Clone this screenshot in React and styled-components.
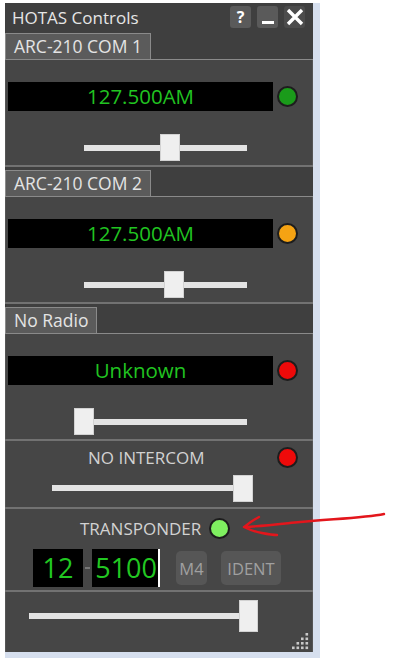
import React from "react"
import styled, { createGlobalStyle } from "styled-components"

const GlobalStyle = createGlobalStyle`
  body { margin: 0; background: #fff; font-family: "Open Sans", "Liberation Sans", sans-serif; }
`

const Page = styled.div`
  position: relative;
  width: 400px;
  height: 666px;
  padding: 3px 0 0 5px;
  box-sizing: border-box;
`

const Window = styled.div`
  width: 308px;
  background: #3f3f3f;
  border-right: 7px solid #d6dfee;
  border-bottom: 6px solid #d6dfee;
  display: flex;
  flex-direction: column;
`

const TitleBar = styled.div`
  height: 28px;
  display: flex;
  align-items: center;
  padding: 0 8px 0 7px;
`
const Title = styled.div`
  color: #e6e6e6;
  font-size: 17px;
`
const TitleButtons = styled.div`
  margin-left: auto;
  display: flex;
  gap: 6px;
`
const TitleBtn = styled.div`
  width: 21px;
  height: 22px;
  border-radius: 3px;
  background: ${p => p.$bg || "#5a5a5a"};
  color: #fff;
  font-weight: bold;
  font-size: 16px;
  display: flex;
  align-items: center;
  justify-content: center;
`
const Underscore = styled.span`
  width: 12px;
  height: 3px;
  background: #fff;
  margin-top: 10px;
`

const Block = styled.div`
  border-top: ${p => (p.$first ? "none" : "2px solid #727272")};
`
const TabStrip = styled.div`
  height: ${p => p.$h || 30}px;
  display: flex;
  align-items: flex-end;
  border-bottom: 1px solid #8a8a8a;
  box-sizing: border-box;
`
const Tab = styled.div`
  height: 26px;
  box-sizing: border-box;
  padding: 0 8px;
  background: #5b5b5b;
  border: 1px solid #8a8a8a;
  border-bottom: none;
  color: #e4e4e4;
  font-size: 17.5px;
  line-height: 25px;
  white-space: nowrap;
`
const Content = styled.div`
  height: ${p => p.$h}px;
  background: #464646;
  box-sizing: border-box;
  padding-top: ${p => p.$pt || 0}px;
  border-left: 1px solid #555;
  border-right: 1px solid #555;
  position: relative;
`

const DisplayRow = styled.div`
  display: flex;
  align-items: center;
  padding-left: 2px;
  height: 29px;
`
const Display = styled.div`
  width: 265px;
  height: 29px;
  background: #000;
  color: #21c421;
  font-size: 20.5px;
  line-height: 29px;
  text-align: center;
`
const Led = styled.div`
  width: ${p => p.$size || 21}px;
  height: ${p => p.$size || 21}px;
  border-radius: 50%;
  box-sizing: border-box;
  background: ${p => p.$color};
  border: 2px solid ${p => p.$rim || "#1d1d1d"};
  margin-left: ${p => p.$ml || 4}px;
  flex-shrink: 0;
`

const SliderArea = styled.div`
  display: flex;
  align-items: center;
  height: ${p => p.$h}px;
  margin-top: ${p => p.$mt || 0}px;
  padding-left: ${p => p.$left}px;
`
const Track = styled.div`
  position: relative;
  width: ${p => p.$w}px;
  height: 6px;
  background: #e3e3e3;
`
const Thumb = styled.div`
  position: absolute;
  top: 50%;
  width: ${p => p.$w}px;
  height: ${p => p.$h}px;
  margin-top: ${p => -p.$h / 2}px;
  margin-left: ${p => -p.$w / 2}px;
  box-sizing: border-box;
  background: #efefef;
  border: 1px solid #d2d2d2;
`

function Slider({ left, width, value, h = 27, tw = 20, th = 27, mt }) {
  return (
    <SliderArea $h={h} $left={left} $mt={mt}>
      <Track $w={width}>
        <Thumb $w={tw} $h={th} style={{ left: `${value * 100}%` }} />
      </Track>
    </SliderArea>
  )
}

const LabelRow = styled.div`
  display: flex;
  align-items: center;
  padding-left: ${p => p.$left}px;
  padding-top: ${p => p.$pt || 0}px;
  height: ${p => p.$h}px;
`
const Label = styled.div`
  color: #d2d2d2;
  font-size: 17px;
`

const CodeRow = styled.div`
  display: flex;
  align-items: center;
  padding-left: 27px;
  margin-top: 4px;
`
const CodeBox = styled.div`
  width: ${p => p.$w}px;
  height: 38px;
  background: #000;
  color: #22c822;
  font-size: 27px;
  line-height: 38px;
  display: flex;
  justify-content: ${p => (p.$right ? "flex-end" : "center")};
  box-sizing: border-box;
`
const Caret = styled.span`
  width: 2px;
  height: 38px;
  background: #fff;
  margin-left: 1px;
`
const Dash = styled.span`
  width: 5px;
  height: 2px;
  background: #777;
  margin: 0 2px;
`
const SmallBtn = styled.div`
  width: ${p => p.$w}px;
  height: 34px;
  margin-left: ${p => p.$ml}px;
  border-radius: 5px;
  background: #565656;
  color: #a0a0a0;
  font-size: 16.5px;
  display: flex;
  align-items: center;
  justify-content: center;
`

const Grip = styled.svg`
  position: absolute;
  right: 3px;
  bottom: 2px;
`

const Annotation = styled.svg`
  position: absolute;
  left: 0;
  top: 0;
  pointer-events: none;
`

function RadioBlock({ first, tab, freq, led, value, stripH }) {
  return (
    <Block $first={first}>
      <TabStrip $h={stripH}>
        <Tab>{tab}</Tab>
      </TabStrip>
      <Content $h={105} $pt={22}>
        <DisplayRow>
          <Display>{freq}</Display>
          <Led $color={led} />
        </DisplayRow>
        <Slider left={78} width={163} value={value} h={27} mt={23} />
      </Content>
    </Block>
  )
}

function GripDots() {
  const dots = []
  for (let r = 0; r < 4; r++) {
    for (let c = 3 - r; c < 4; c++) {
      dots.push(<rect key={`${r}-${c}`} x={c * 4.5} y={r * 4.5} width="2.6" height="2.6" fill="#c8c8c8" />)
    }
  }
  return (
    <Grip width="17" height="17" viewBox="0 0 17 17">
      {dots}
    </Grip>
  )
}

export default function App() {
  return (
    <Page>
      <GlobalStyle />
      <Window>
        <TitleBar>
          <Title>HOTAS Controls</Title>
          <TitleButtons>
            <TitleBtn>?</TitleBtn>
            <TitleBtn><Underscore /></TitleBtn>
            <TitleBtn $bg="#4c4c4c">
              <svg width="18" height="18" viewBox="0 0 18 18">
                <path d="M2 2 L16 16 M16 2 L2 16" stroke="#fff" strokeWidth="3.4" />
              </svg>
            </TitleBtn>
          </TitleButtons>
        </TitleBar>

        <RadioBlock first stripH={29} tab="ARC-210 COM 1" freq="127.500AM" led="#1a9b1a" value={0.53} />
        <RadioBlock tab="ARC-210 COM 2" freq="127.500AM" led="#f5a313" value={0.55} />
        <RadioBlock tab="No Radio" freq="Unknown" led="#ee0a0a" value={0} />

        <Block>
          <Content $h={66}>
            <LabelRow $left={82} $h={28} $pt={2}>
              <Label>NO INTERCOM</Label>
              <Led $color="#ee0a0a" $ml={72} />
            </LabelRow>
            <Slider left={46} width={191} value={1} h={30} mt={2} />
          </Content>
        </Block>

        <Block>
          <Content $h={81}>
            <LabelRow $left={74} $h={34} $pt={2}>
              <Label>TRANSPONDER</Label>
              <Led $color="#7ff060" $ml={8} />
            </LabelRow>
            <CodeRow>
              <CodeBox $w={50}>12</CodeBox>
              <Dash />
              <CodeBox $w={68} $right>5100<Caret /></CodeBox>
              <SmallBtn $w={31} $ml={16}>M4</SmallBtn>
              <SmallBtn $w={60} $ml={14}>IDENT</SmallBtn>
            </CodeRow>
          </Content>
        </Block>

        <Block>
          <Content $h={60} $pt={8}>
            <Slider left={23} width={219} value={1} h={32} tw={19} th={32} />
            <GripDots />
          </Content>
        </Block>
      </Window>

      <Annotation width="400" height="666" viewBox="0 0 400 666">
        <path
          d="M384 514 C 365 518, 330 519, 300 522 C 280 524, 262 526, 246 527 M259 517 C 253 520, 248 524, 244 527 C 250 530, 256 532, 262 533 C 267 534, 272 535, 277 535"
          stroke="#e3161c"
          strokeWidth="2.4"
          fill="none"
          strokeLinecap="round"
          strokeLinejoin="round"
        />
      </Annotation>
    </Page>
  )
}
